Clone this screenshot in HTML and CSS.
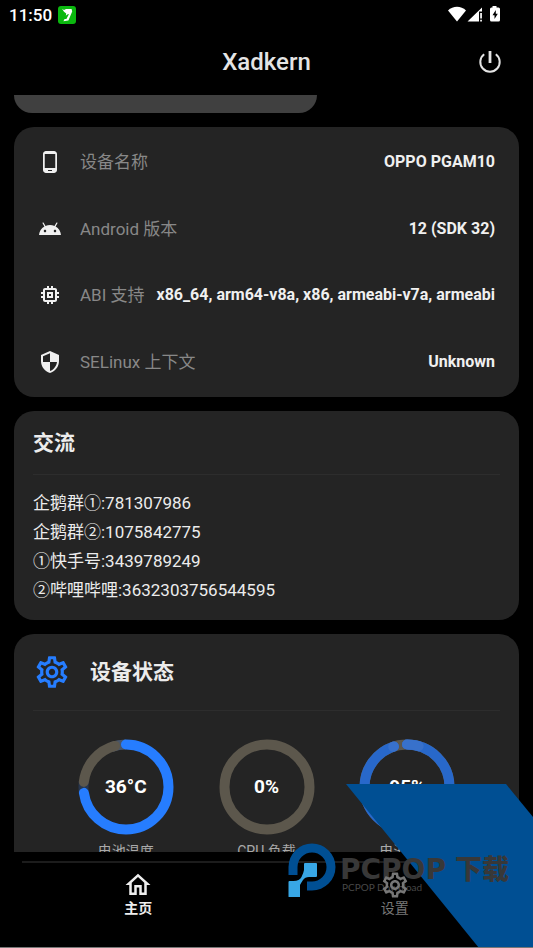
FILE: index.html
```html
<!DOCTYPE html>
<html lang="zh-CN">
<head>
<meta charset="utf-8">
<meta name="viewport" content="width=device-width, initial-scale=1">
<title>Xadkern</title>
<link rel="stylesheet" href="styles.css">
</head>
<body>
<div class="statusbar">
  <span class="clock">11:50</span>
  <svg class="app-badge" viewBox="0 0 18 18" aria-hidden="true"><rect width="18" height="18" rx="3" fill="#0bb80f"/><path d="M4 2.800l2 1.200 2-1h5.600l.6 2.400-3.800 9.200-5 .6 1.200-2.200h1.800l2.600-5-1.800.4-1.400 1.400.4-2.200-2.200-1.800z" fill="#fff"/></svg>
  <svg class="signals" viewBox="0 0 54 18" aria-hidden="true">
    <path d="M0 4.400C5-.4 13-.4 18 4.400L9 15.500z" fill="#fff"/>
    <path d="M19.500 15.500L34 1.500v4h-3v10z" fill="#fff"/><path d="M32.200 7h1.700v5.500h-1.700zM32.200 13.800h1.700v1.700h-1.700z" fill="#fff"/>
    <path d="M44.500 1.500V0h4v1.500h2q1.500 0 1.500 1.500v11q0 1.500-1.500 1.500h-7q-1.500 0-1.500-1.500V3q0-1.500 1.500-1.500z" fill="#fff"/>
    <path d="M47.800 4l-3.300 5.300h2v3.700l3.300-5.300h-2z" fill="#000"/>
  </svg>
</div>
<header class="topbar">
  <h1>Xadkern</h1>
  <button class="power" type="button" aria-label="电源">
    <svg viewBox="0 0 24 24"><path d="M6.200 4.200A9.700 9.700 0 1 0 17.800 4.200" fill="none" stroke="currentColor" stroke-width="2"/><path d="M10.600 1h2.800v12h-2.800z" fill="currentColor"/></svg>
  </button>
</header>
<main class="content">
  <div class="panel-end"></div>
  <section class="card info">
    <dl>
      <div class="row">
        <svg viewBox="0 0 24 24"><path d="M16 1H8C6.340 1 5 2.340 5 4v16c0 1.660 1.340 3 3 3h8c1.660 0 3-1.340 3-3V4c0-1.660-1.340-3-3-3zm-2 20h-4v-1h4v1zm3.250-3H6.750V4h10.500v14z"/></svg>
        <dt>设备名称</dt><dd>OPPO PGAM10</dd>
      </div>
      <div class="row">
        <svg viewBox="0 0 24 24"><path d="M17.600 9.480l1.840-3.180c.16-.31.04-.69-.26-.85-.29-.15-.65-.06-.83.22l-1.880 3.240c-2.860-1.210-6.080-1.210-8.940 0L5.650 5.670c-.19-.29-.58-.38-.87-.2-.28.18-.37.54-.22.83L6.400 9.480C3.300 11.250 1.280 14.440 1 18h22c-.28-3.560-2.300-6.750-5.400-8.520zM7 15.250c-.69 0-1.250-.56-1.250-1.250s.56-1.250 1.250-1.250 1.250.56 1.250 1.250-.56 1.250-1.250 1.250zm10 0c-.69 0-1.250-.56-1.250-1.250s.56-1.250 1.250-1.250 1.250.56 1.250 1.250-.56 1.250-1.250 1.250z"/></svg>
        <dt>Android 版本</dt><dd>12 (SDK 32)</dd>
      </div>
      <div class="row">
        <svg viewBox="0 0 24 24"><path d="M15 9H9v6h6V9zm-2 4h-2v-2h2v2zm8-2V9h-2V7c0-1.100-.9-2-2-2h-2V3h-2v2h-2V3H9v2H7c-1.100 0-2 .9-2 2v2H3v2h2v2H3v2h2v2c0 1.100.9 2 2 2h2v2h2v-2h2v2h2v-2h2c1.100 0 2-.9 2-2v-2h2v-2h-2v-2h2zm-4 6H7V7h10v10z"/></svg>
        <dt>ABI 支持</dt><dd>x86_64, arm64-v8a, x86, armeabi-v7a, armeabi</dd>
      </div>
      <div class="row">
        <svg viewBox="0 0 24 24"><path d="M12 1L3 5v6c0 5.550 3.840 10.740 9 12 5.160-1.260 9-6.450 9-12V5l-9-4zm0 10.990h7c-.53 4.120-3.280 7.790-7 8.940V12H5V6.300l7-3.110v8.800z"/></svg>
        <dt>SELinux 上下文</dt><dd>Unknown</dd>
      </div>
    </dl>
  </section>
  <section class="card">
    <div class="card-head chat-head"><h2>交流</h2></div>
    <ul class="contacts">
      <li>企鹅群①:781307986</li>
      <li>企鹅群②:1075842775</li>
      <li>①快手号:3439789249</li>
      <li>②哔哩哔哩:3632303756544595</li>
    </ul>
  </section>
  <section class="card">
    <div class="card-head state-head">
      <svg class="gear" viewBox="0 0 24 24"><use href="#gear"/></svg>
      <h2>设备状态</h2>
    </div>
    <div class="gauges">
      <div class="gauge">
        <div class="dial">
          <svg viewBox="0 0 96 96"><g transform="rotate(-90 48 48)">
            <circle class="gap-top" cx="48" cy="48" r="42.500" pathLength="360" stroke-dasharray="20 340" stroke-dashoffset="-340"/>
            <circle class="gap-side" cx="48" cy="48" r="42.500" pathLength="360" stroke-dasharray="14 346" stroke-dashoffset="-263"/>
            <circle class="track round" cx="48" cy="48" r="42.500" pathLength="360" stroke-dasharray="68 292" stroke-dashoffset="-277"/>
            <circle class="bar round" cx="48" cy="48" r="42.500" pathLength="360" stroke-dasharray="262 98"/>
          </g></svg>
          <strong>36°C</strong>
        </div>
        <span>电池温度</span>
      </div>
      <div class="gauge">
        <div class="dial">
          <svg viewBox="0 0 96 96"><circle class="track" cx="48" cy="48" r="42.500"/></svg>
          <strong>0%</strong>
        </div>
        <span>CPU 负载</span>
      </div>
      <div class="gauge">
        <div class="dial">
          <svg viewBox="0 0 96 96"><g transform="rotate(-90 48 48)">
            <circle class="track" cx="48" cy="48" r="42.500"/>
            <circle class="bar deep round" cx="48" cy="48" r="42.500" pathLength="360" stroke-dasharray="342 18"/>
            <circle class="bar pale round" cx="48" cy="48" r="42.500" pathLength="360" stroke-dasharray="16 344"/>
            <circle class="bar pale round" cx="48" cy="48" r="42.500" pathLength="360" stroke-dasharray="1 359" stroke-dashoffset="-341"/>
          </g></svg>
          <strong>95%</strong>
        </div>
        <span>电池电量</span>
      </div>
    </div>
  </section>
</main>
<nav class="tabs">
  <div class="tabs-inner">
    <a class="tab active" href="#home"><svg viewBox="0 0 24 24"><path d="M12 5.690l5 4.500V18h-2v-6H9v6H7v-7.810l5-4.500M12 3L2 12h3v8h6v-6h2v6h6v-8h3L12 3z"/></svg>主页</a>
    <a class="tab" href="#settings"><svg viewBox="0 0 24 24"><path id="gear" d="M19.430 12.980c.04-.32.07-.64.07-.98 0-.34-.03-.66-.07-.98l2.110-1.650c.19-.15.24-.42.12-.64l-2-3.460c-.09-.16-.26-.25-.44-.25-.06 0-.12.01-.17.03l-2.490 1c-.52-.4-1.080-.73-1.690-.98l-.38-2.650C14.460 2.180 14.250 2 14 2h-4c-.25 0-.46.18-.49.42l-.38 2.650c-.61.25-1.170.59-1.690.98l-2.490-1c-.06-.02-.12-.03-.18-.03-.17 0-.34.09-.43.25l-2 3.460c-.13.22-.07.49.12.64l2.110 1.650c-.04.32-.07.65-.07.98 0 .33.03.66.07.98l-2.110 1.650c-.19.15-.24.42-.12.64l2 3.460c.09.16.26.25.44.25.06 0 .12-.01.17-.03l2.490-1c.52.4 1.080.73 1.690.98l.38 2.650c.03.24.24.42.49.42h4c.25 0 .46-.18.49-.42l.38-2.650c.61-.25 1.170-.59 1.690-.98l2.490 1c.06.02.12.03.18.03.17 0 .34-.09.43-.25l2-3.460c.12-.22.07-.49-.12-.64l-2.110-1.650zm-1.980-1.710c.04.31.05.52.05.73 0 .21-.02.43-.05.73l-.14 1.130.89.7 1.080.84-.7 1.210-1.270-.51-1.040-.42-.9.68c-.43.32-.84.56-1.250.73l-1.060.43-.16 1.130-.2 1.350h-1.400l-.19-1.350-.16-1.130-1.060-.43c-.43-.18-.83-.41-1.230-.71l-.91-.7-1.060.43-1.270.51-.7-1.210 1.080-.84.89-.7-.14-1.130c-.03-.31-.05-.54-.05-.74s.02-.43.05-.73l.14-1.130-.89-.7-1.080-.84.7-1.210 1.270.51 1.040.42.9-.68c.43-.32.84-.56 1.250-.73l1.060-.43.16-1.130.2-1.350h1.390l.19 1.350.16 1.130 1.060.43c.43.18.83.41 1.230.71l.91.7 1.060-.43 1.270-.51.7 1.210-1.070.85-.89.7.14 1.130zM12 8c-2.210 0-4 1.790-4 4s1.790 4 4 4 4-1.790 4-4-1.790-4-4-4zm0 6c-1.100 0-2-.9-2-2s.9-2 2-2 2 .9 2 2-.9 2-2 2z"/></svg>设置</a>
  </div>
</nav>
<svg class="brand" viewBox="0 0 245 164">
  <path d="M58 0H218L245 33V164H191z" fill="#004f93"/>
  <path d="M.5 91V83A23.500 23.500 0 1 1 24 106.500H19V97.500H24A14.500 14.500 0 1 0 9.500 83V91z" fill="#004f93"/>
  <path d="M17 79h11q1 0 1 1v12q0 1-1 1h-7q-4 0-6 3t-3 5v11.500q0 .5-.5.5H1q-.5 0-.5-.5V98q0-1 1-1h4q6 0 8-4t2.500-7v-6q0-1 1-1z" fill="#38a7e6"/>
  <text class="brand-name" x="52" y="95">PCPOP</text>
  <text class="brand-name brand-cjk" x="167" y="95">下载</text>
  <text class="brand-sub" x="54" y="107">PCPOP Download</text>
</svg>
</body>
</html>
```
FILE: styles.css
```css
* { box-sizing: border-box; margin: 0; padding: 0; }

body {
  display: flex;
  flex-direction: column;
  position: relative;
  height: 100vh;
  overflow: hidden;
  background: #000;
  color: #ececec;
  border-bottom: 1px solid #777;
  font: 16px/24px Roboto, "Noto Sans CJK SC", sans-serif;
}

svg { display: block; flex: none; fill: currentColor; }

.statusbar { display: flex; align-items: center; height: 29px; padding: 0 31px 0 9px; color: #fff; }
.clock { font-size: 17px; font-weight: 500; }
.app-badge { width: 18px; height: 18px; margin-left: 6px; }
.signals { width: 54px; height: 18px; margin-left: auto; }

.topbar { display: grid; grid-template-columns: 1fr auto 1fr; align-items: center; height: 66px; padding: 0 31px; color: #e4e4e4; }
.topbar h1 { grid-column: 2; font-size: 24px; font-weight: 500; }
.power { justify-self: end; border: 0; background: none; color: inherit; }
.power svg { width: 24px; height: 24px; }

.content { flex: 1; min-height: 0; overflow: hidden; display: flex; flex-direction: column; gap: 14px; padding: 0 14px; }
.content > * { flex: none; }
.panel-end { width: 60%; height: 18px; background: #404040; border-radius: 0 0 18px 18px; }

.card { background: #242424; border-radius: 20px; padding: 0 19px; }
.info { padding: 2px 24px; }
.info dl { display: grid; grid-auto-rows: 1fr; height: 266px; }
.row { display: flex; align-items: center; color: #f0f0f0; }
.row svg { width: 24px; height: 24px; }
.row dt { margin-left: 18px; font-size: 17px; color: #888; white-space: nowrap; }
.row dd { margin-left: auto; font-weight: 700; white-space: nowrap; }

.card-head { display: flex; align-items: center; border-bottom: 1px solid #2d2d2d; }
.card-head h2 { font-size: 21px; line-height: 28px; font-weight: 700; }
.chat-head { height: 64px; }
.state-head { height: 77px; gap: 19px; }
.gear { width: 38px; height: 38px; color: #267dff; }

.contacts { list-style: none; padding: 14px 0 15px; font-size: 17px; line-height: 29px; }

.gauges { display: flex; justify-content: space-evenly; padding: 28px 0 20px; }
.gauge { display: flex; flex-direction: column; align-items: center; width: 96px; font-size: 14px; line-height: 20px; color: #aaa; }
.gauge > span { margin-top: 6px; }
.dial { display: grid; place-items: center; width: 96px; height: 96px; }
.dial > * { grid-area: 1 / 1; }
.dial svg { width: 96px; height: 96px; }
.dial strong { font-size: 19px; color: #fff; }
.dial circle { fill: none; stroke-width: 10; }
.track { stroke: #5c574c; }
.bar { stroke: #267dff; }
.dial .deep { stroke: #2868ca; }
.dial .pale { stroke: #3871cb; }
.gap-top { stroke: #495669; }
.gap-side { stroke: #263650; }
.round { stroke-linecap: round; }

.tabs { height: 95px; padding: 9px 10px 0; }
.tabs::before { content: ""; display: block; height: 2px; margin: 0 12px; background: #1c1c1c; }
.tabs-inner { display: grid; grid-template-columns: 1fr 1fr; padding-top: 7px; }
.tab { position: relative; z-index: 2; display: flex; flex-direction: column; align-items: center; font-size: 14px; line-height: 16px; color: #777; text-decoration: none; }
.tab svg { width: 30px; height: 30px; }
.active { color: #eee; font-weight: 700; }

.brand { position: absolute; right: 0; bottom: -1px; z-index: 1; width: 245px; height: 164px; pointer-events: none; }
.brand-name { font: 900 28px "DejaVu Sans", sans-serif; fill: #383838; }
.brand-cjk { font: 900 27px "Noto Sans CJK SC", sans-serif; }
.brand-sub { font: 10px Lato, sans-serif; fill: #484848; }
```
